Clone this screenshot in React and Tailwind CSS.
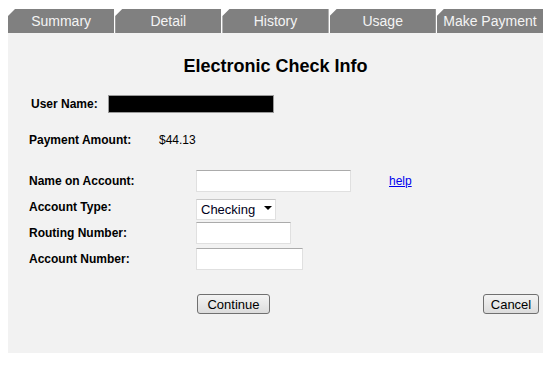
import { useState } from "react";

const tabs = ["Summary", "Detail", "History", "Usage", "Make Payment"];

const fields = [
  { label: "Name on Account:", width: "w-[155px]", help: true },
  { label: "Account Type:", select: true },
  { label: "Routing Number:", width: "w-[95px]" },
  { label: "Account Number:", width: "w-[107px]" },
];

const inputClass =
  "h-[22px] border border-[#e0e0e0] border-t-[#ababab] bg-white px-1 text-[13px] outline-none";

const buttonClass =
  "h-[20px] rounded-[3px] border border-[#707070] bg-[linear-gradient(#f4f4f4,#dcdcdc)] text-[13px] leading-none text-black";

const App = () => {
  const [accountType, setAccountType] = useState("Checking");

  return (
    <div className="w-[549px] bg-white pl-[8px] pt-[9px] font-['Liberation_Sans',Arial,sans-serif]">
      <div className="flex w-[535px] gap-px">
        {tabs.map((tab) => (
          <div
            key={tab}
            className="flex h-[24px] flex-1 items-center justify-center bg-[#808080] text-[14px] text-[#f4f4f4] [clip-path:polygon(7px_0,100%_0,100%_100%,0_100%,0_7px)]"
          >
            {tab}
          </div>
        ))}
      </div>

      <div className="flex h-[320px] w-[535px] flex-col bg-[#f2f2f2]">
        <h1 className="mt-[23px] h-[21px] text-center text-[18px] font-bold leading-[21px] text-black">
          Electronic Check Info
        </h1>

        <div className="mt-[17px] flex h-[20px] items-center pl-[23px]">
          <span className="w-[77px] text-[12px] font-bold">User Name:</span>
          <div className="h-[18px] w-[166px] border border-[#9a9a9a] bg-black" />
        </div>

        <div className="mt-[16px] flex h-[20px] items-center pl-[21px]">
          <span className="w-[130px] text-[12px] font-bold">Payment Amount:</span>
          <span className="text-[12px]">$44.13</span>
        </div>

        <div className="mt-[20px] flex flex-col gap-[4px] pl-[21px]">
          {fields.map((field) => (
            <div key={field.label} className="flex h-[22px] items-center">
              <span className="w-[167px] text-[12px] font-bold">{field.label}</span>
              {field.select ? (
                <div className="relative h-[21px] w-[80px]">
                  <select
                    value={accountType}
                    onChange={(event) => setAccountType(event.target.value)}
                    className="h-full w-full appearance-none border border-[#e0e0e0] border-t-[#c8c8c8] bg-white pl-[4px] text-[13px] text-[#000020] outline-none"
                  >
                    <option>Checking</option>
                    <option>Savings</option>
                  </select>
                  <svg
                    className="pointer-events-none absolute right-[4px] top-[9px]"
                    width="8"
                    height="4"
                    viewBox="0 0 8 4"
                  >
                    <path d="M0 0h8L4 4z" fill="#000" />
                  </svg>
                </div>
              ) : (
                <input type="text" className={`${inputClass} ${field.width}`} />
              )}
              {field.help && (
                <a
                  href="#"
                  className="ml-[38px] text-[12px] text-[#0000ee] underline"
                >
                  help
                </a>
              )}
            </div>
          ))}
        </div>

        <div className="mt-[24px] flex items-center justify-between pl-[189px] pr-[4px]">
          <button type="button" className={`${buttonClass} w-[73px]`}>
            Continue
          </button>
          <button type="button" className={`${buttonClass} w-[56px]`}>
            Cancel
          </button>
        </div>
      </div>
    </div>
  );
};

export default App;
